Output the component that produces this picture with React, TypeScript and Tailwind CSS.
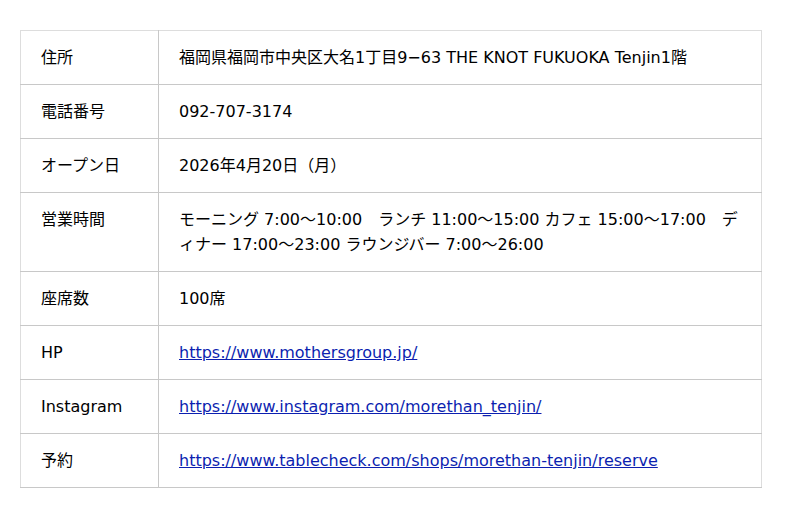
const rows: { label: string; value: string; href?: boolean }[] = [
  { label: "住所", value: "福岡県福岡市中央区大名1丁目9−63 THE KNOT FUKUOKA Tenjin1階" },
  { label: "電話番号", value: "092-707-3174" },
  { label: "オープン日", value: "2026年4月20日（月）" },
  {
    label: "営業時間",
    value:
      "モーニング 7:00～10:00　ランチ 11:00～15:00 カフェ 15:00～17:00　ディナー 17:00～23:00 ラウンジバー 7:00～26:00",
  },
  { label: "座席数", value: "100席" },
  { label: "HP", value: "https://www.mothersgroup.jp/", href: true },
  { label: "Instagram", value: "https://www.instagram.com/morethan_tenjin/", href: true },
  { label: "予約", value: "https://www.tablecheck.com/shops/morethan-tenjin/reserve", href: true },
];

export default function App() {
  return (
    <div
      className="w-[800px] h-[518px] bg-white pt-[30px] pl-5"
      style={{ fontFamily: '"DejaVu Sans", "Noto Sans CJK JP", sans-serif' }}
    >
      <table className="w-[742px] border-collapse border border-[#dddddd] text-[16px] leading-[25px] text-black">
        <tbody>
          {rows.map((r) => (
            <tr key={r.label} className="border-b border-[#c8c8c8]">
              <td className="w-[138px] border-r border-[#c8c8c8] px-5 py-[14px] align-top">
                {r.label}
              </td>
              <td className="px-5 py-[14px] align-top break-all">
                {r.href ? (
                  <a href="#" className="text-[#0c1fb0] underline">
                    {r.value}
                  </a>
                ) : (
                  r.value
                )}
              </td>
            </tr>
          ))}
        </tbody>
      </table>
    </div>
  );
}
